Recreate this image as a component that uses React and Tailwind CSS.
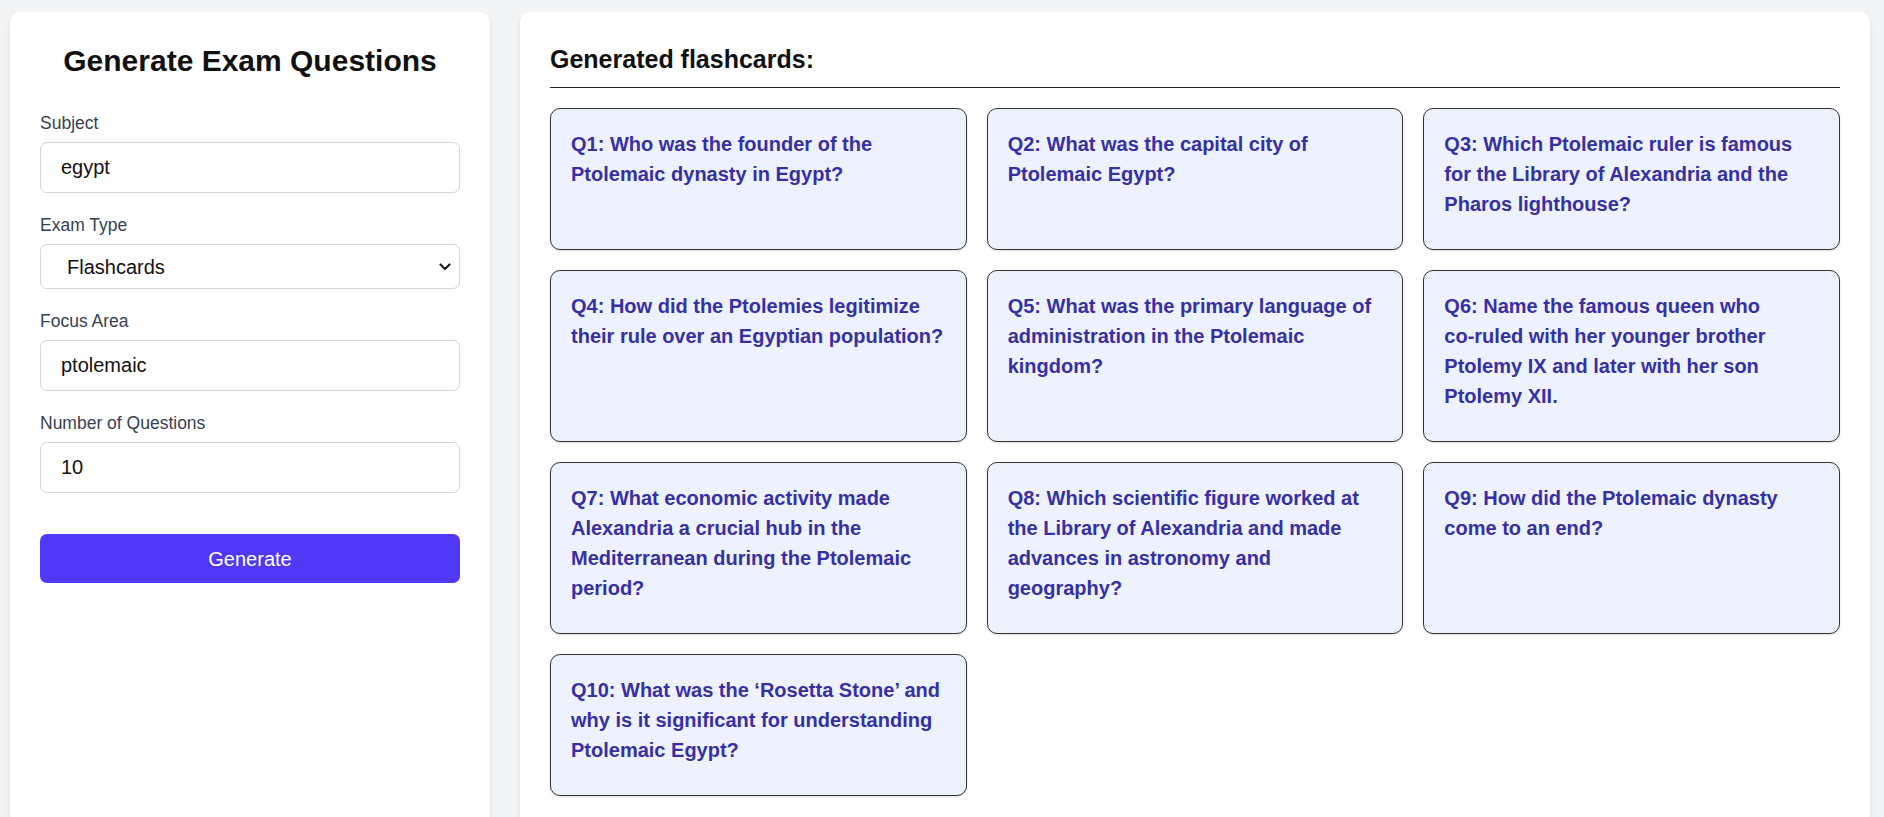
import React from "react";

const questions = [
  "Q1: Who was the founder of the Ptolemaic dynasty in Egypt?",
  "Q2: What was the capital city of Ptolemaic Egypt?",
  "Q3: Which Ptolemaic ruler is famous for the Library of Alexandria and the Pharos lighthouse?",
  "Q4: How did the Ptolemies legitimize their rule over an Egyptian population?",
  "Q5: What was the primary language of administration in the Ptolemaic kingdom?",
  "Q6: Name the famous queen who co\u2011ruled with her younger brother Ptolemy IX and later with her son Ptolemy XII.",
  "Q7: What economic activity made Alexandria a crucial hub in the Mediterranean during the Ptolemaic period?",
  "Q8: Which scientific figure worked at the Library of Alexandria and made advances in astronomy and geography?",
  "Q9: How did the Ptolemaic dynasty come to an end?",
  "Q10: What was the \u2018Rosetta Stone\u2019 and why is it significant for understanding Ptolemaic Egypt?",
];

function Field({ label, children }) {
  return (
    <div className="mb-[20px]">
      <label className="block text-[17.5px] leading-[25px] text-[#374151] mb-[6px]">
        {label}
      </label>
      {children}
    </div>
  );
}

export default function App() {
  return (
    <div
      className="min-h-screen bg-[#f3f4f6] flex items-stretch gap-[30px] pl-[10px] pr-[14px] pt-[12px] pb-[12px]"
      style={{ fontFamily: '"Liberation Sans", Arial, sans-serif' }}
    >
      <aside className="w-[480px] shrink-0 bg-white rounded-[10px] shadow-md p-[30px]">
        <h1 className="text-[30px] leading-[38px] font-bold text-center text-[#111111] mb-[31px]">
          Generate Exam Questions
        </h1>
        <Field label="Subject">
          <input
            readOnly
            value="egypt"
            className="w-full h-[51px] border border-[#d1d5db] rounded-[7px] px-[20px] text-[20px] text-[#111111] bg-white outline-none"
          />
        </Field>
        <Field label="Exam Type">
          <div className="relative">
            <select
              defaultValue="flashcards"
              className="w-full h-[45px] appearance-none border border-[#d1d5db] rounded-[7px] pl-[26px] pr-[40px] text-[20px] text-[#111111] bg-white outline-none"
            >
              <option value="flashcards">Flashcards</option>
            </select>
            <svg
              className="absolute right-[9px] top-1/2 -translate-y-1/2 pointer-events-none"
              width="12"
              height="8"
              viewBox="0 0 12 8"
            >
              <path d="M1.5 1.5 L6 6 L10.5 1.5" fill="none" stroke="#222" strokeWidth="2.2" strokeLinecap="round" strokeLinejoin="round" />
            </svg>
          </div>
        </Field>
        <Field label="Focus Area">
          <input
            readOnly
            value="ptolemaic"
            className="w-full h-[51px] border border-[#d1d5db] rounded-[7px] px-[20px] text-[20px] text-[#111111] bg-white outline-none"
          />
        </Field>
        <Field label="Number of Questions">
          <input
            readOnly
            value="10"
            className="w-full h-[51px] border border-[#d1d5db] rounded-[7px] px-[20px] text-[20px] text-[#111111] bg-white outline-none"
          />
        </Field>
        <button className="w-full h-[49px] mt-[21px] bg-[#4f39f6] text-white text-[20px] rounded-[7px]">
          Generate
        </button>
      </aside>

      <main className="flex-1 bg-white rounded-[10px] shadow-md p-[30px]">
        <h2 className="text-[25px] leading-[35px] font-bold text-[#111111] pb-[10px] border-b border-[#222222] mb-[20px]">
          Generated flashcards:
        </h2>
        <div className="grid grid-cols-3 gap-[20px]">
          {questions.map((q, i) => (
            <div
              key={i}
              className="bg-[#eef2ff] border border-[#333333] rounded-[10px] p-[20px] shadow-sm"
            >
              <p className="font-bold text-[20px] leading-[30px] text-[#3730a3] mb-[10px]">{q}</p>
            </div>
          ))}
        </div>
      </main>
    </div>
  );
}
